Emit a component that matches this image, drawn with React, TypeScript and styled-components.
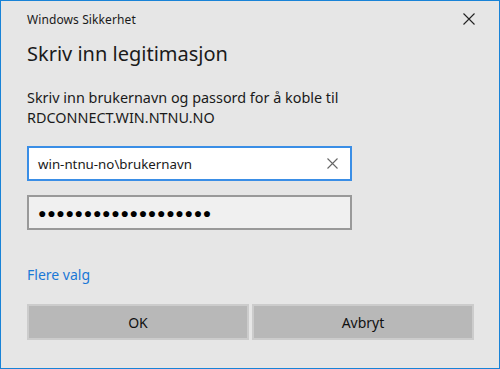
import React from "react";
import styled, { createGlobalStyle } from "styled-components";

const GlobalStyle = createGlobalStyle`
  html, body {
    margin: 0;
    padding: 0;
    background: #e6e6e6;
  }
  * {
    box-sizing: border-box;
  }
`;

const Window = styled.div`
  width: 500px;
  height: 369px;
  background: #e6e6e6;
  border: 1px solid #1883d7;
  font-family: "Noto Sans", "Open Sans", sans-serif;
  color: #1a1a1a;
  display: flex;
  flex-direction: column;
  padding: 0 26px 0 26px;
`;

const TitleBar = styled.div`
  display: flex;
  align-items: center;
  justify-content: space-between;
  height: 35px;
  padding-top: 1px;
`;

const Caption = styled.span`
  font-size: 12px;
  letter-spacing: 0.1px;
`;

const CloseButton = styled.button`
  border: none;
  background: transparent;
  width: 24px;
  height: 24px;
  margin-right: -8px;
  display: flex;
  align-items: center;
  justify-content: center;
  padding: 0;
  color: #222;
`;

const Heading = styled.h1`
  margin: 4px 0 0 0;
  font-size: 20px;
  font-weight: 400;
  line-height: 28px;
`;

const Message = styled.p`
  margin: 20px 0 0 0;
  font-size: 14.4px;
  line-height: 20px;
`;

const Field = styled.div<{ $focused?: boolean }>`
  width: 325px;
  height: 35px;
  display: flex;
  align-items: center;
  padding: 0 8px 0 9px;
  border: 2px solid ${(p) => (p.$focused ? "#3a8ee6" : "#999999")};
  background: ${(p) => (p.$focused ? "#ffffff" : "#f0f0f0")};
  margin-top: ${(p) => (p.$focused ? "18px" : "14px")};
`;

const FieldText = styled.span`
  flex: 1;
  font-size: 13.3px;
`;

const Dots = styled.span`
  flex: 1;
  font-size: 14px;
  letter-spacing: 0.7px;
  color: #000;
`;

const ClearIcon = styled.span`
  display: flex;
  color: #666;
  margin-right: 4px;
`;

const MoreLink = styled.a`
  margin-top: 35px;
  font-size: 14px;
  color: #1a78d6;
  text-decoration: none;
  line-height: 20px;
`;

const ButtonRow = styled.div`
  display: grid;
  grid-template-columns: 222px 222px;
  gap: 3px;
  margin-top: 19px;
`;

const Button = styled.button`
  height: 36px;
  border: 2px solid #cccccc;
  background: #b8b8b8;
  font-family: inherit;
  font-size: 14px;
  color: #111;
  padding: 0;
`;

export default function App() {
  return (
    <>
      <GlobalStyle />
      <Window>
        <TitleBar>
          <Caption>Windows Sikkerhet</Caption>
          <CloseButton aria-label="Lukk">
            <svg width="12" height="12" viewBox="0 0 12 12">
              <path d="M0.5 0.5 L11.5 11.5 M11.5 0.5 L0.5 11.5" stroke="#222" strokeWidth="1.1" />
            </svg>
          </CloseButton>
        </TitleBar>
        <Heading>Skriv inn legitimasjon</Heading>
        <Message>
          Skriv inn brukernavn og passord for å koble til
          <br />
          RDCONNECT.WIN.NTNU.NO
        </Message>
        <Field $focused>
          <FieldText>win-ntnu-no\brukernavn</FieldText>
          <ClearIcon>
            <svg width="11" height="11" viewBox="0 0 11 11">
              <path d="M0.5 0.5 L10.5 10.5 M10.5 0.5 L0.5 10.5" stroke="#666" strokeWidth="1.1" />
            </svg>
          </ClearIcon>
        </Field>
        <Field>
          <Dots>{"●".repeat(19)}</Dots>
        </Field>
        <MoreLink href="#">Flere valg</MoreLink>
        <ButtonRow>
          <Button>OK</Button>
          <Button>Avbryt</Button>
        </ButtonRow>
      </Window>
    </>
  );
}
